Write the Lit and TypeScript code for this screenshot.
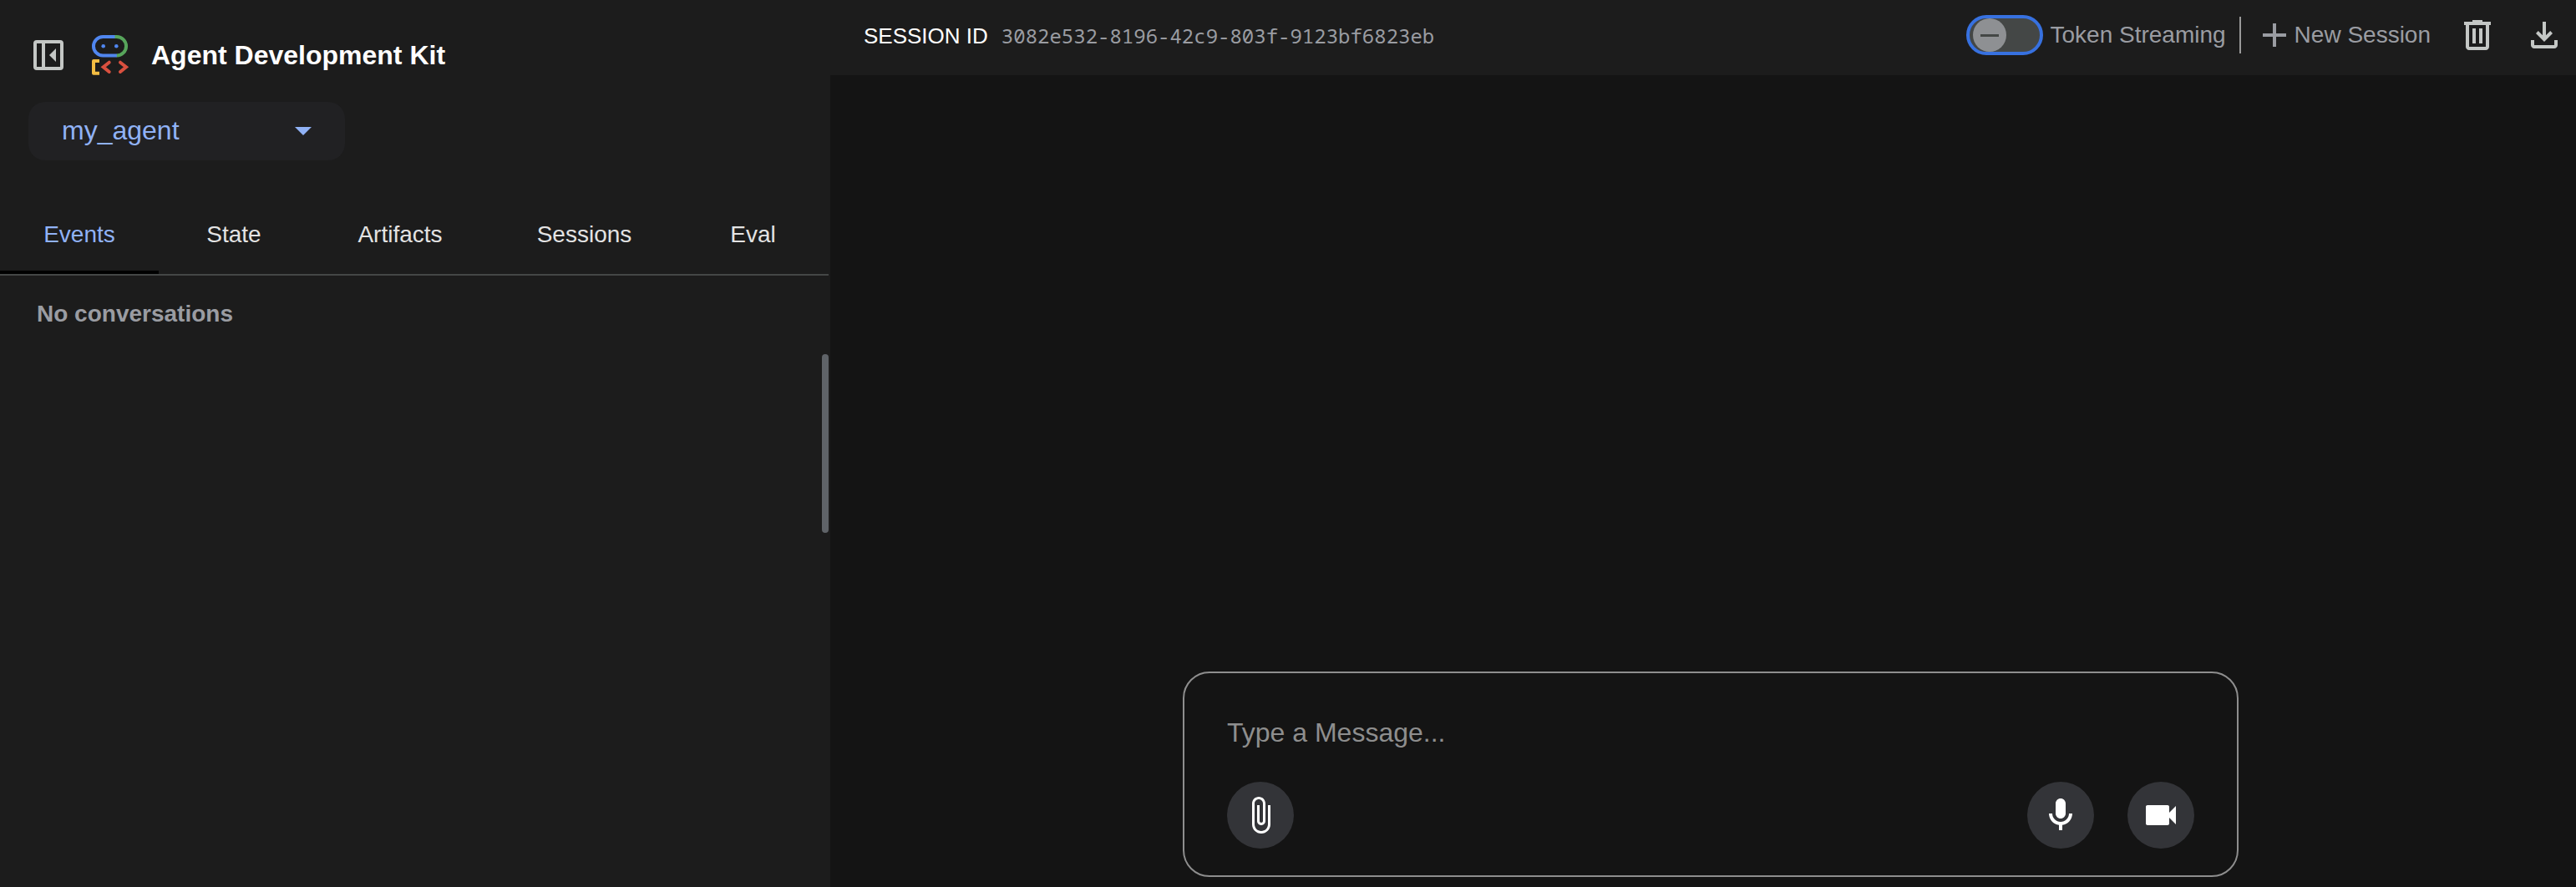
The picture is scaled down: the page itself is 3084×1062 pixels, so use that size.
import { LitElement, html, css, svg } from "lit";
import { customElement, state } from "lit/decorators.js";

const TABS = ["Events", "State", "Artifacts", "Sessions", "Eval"];

@customElement("app-root")
export class AppRoot extends LitElement {
  @state() private tab = "Events";

  static styles = css`
    :host {
      display: block;
      font-family: "Liberation Sans", Arial, sans-serif;
      color: #e3e3e3;
      color-scheme: dark;
    }
    * { box-sizing: border-box; }
    svg { display: block; flex: none; }
    button, select, textarea {
      font: inherit;
      color: inherit;
      background: none;
      border: 0;
      padding: 0;
      margin: 0;
      outline: 0;
    }
    button { cursor: pointer; }
    .app { display: flex; height: 100vh; background: #141414; }

    .side {
      position: relative;
      width: 994px;
      flex: none;
      background: #1c1c1c;
      display: flex;
      flex-direction: column;
    }
    .brand {
      display: flex;
      align-items: center;
      padding: 40px 36px 0 34px;
      height: 92px;
    }
    .collapse { color: #c4c7c5; margin-right: 27px; }
    .logo { margin-right: 24px; }
    .title { margin: 0; font-size: 32px; line-height: 52px; font-weight: 700; color: #fff; }
    .picker {
      position: relative;
      display: flex;
      align-items: center;
      width: 379px;
      height: 70px;
      margin: 30px 0 0 34px;
      border-radius: 20px;
      background: #212123;
      color: #90b2f6;
    }
    .picker select {
      appearance: none;
      width: 100%;
      height: 100%;
      padding: 0 40px 2px;
      font-size: 32px;
    }
    .caret { position: absolute; right: 40px; pointer-events: none; }
    .tabs {
      display: grid;
      grid-template-columns: 190fr 180fr 218fr 223fr 181fr;
      margin-top: 40px;
      border-bottom: 2px solid #444746;
      margin-right: 2px;
    }
    .tab {
      height: 96px;
      padding-top: 6px;
      font-size: 28px;
      border-bottom: 4px solid transparent;
    }
    .tab.on { color: #90b2f6; border-bottom-color: #000; }
    .empty { margin: 28px 44px; font-size: 28px; line-height: 36px; font-weight: 700; color: #9a9ca2; }
    .grip {
      position: absolute;
      right: 2px;
      top: 424px;
      width: 8px;
      height: 214px;
      border-radius: 4px;
      background: #5f6368;
    }

    .main { flex: 1; min-width: 0; display: flex; flex-direction: column; }
    .bar {
      display: flex;
      align-items: center;
      height: 90px;
      padding: 0 14px 6px 40px;
      background: #1c1c1c;
      color: #9a9ca2;
      font-size: 28px;
    }
    .session { display: flex; align-items: baseline; gap: 16px; }
    .sid { color: #fff; font-size: 26px; }
    .uuid { font-family: "Noto Sans Mono", "DejaVu Sans Mono", monospace; font-size: 24px; }
    .actions { display: flex; align-items: center; margin-left: auto; }
    .toggle { display: flex; align-items: center; gap: 8px; cursor: pointer; }
    .switch {
      appearance: none;
      position: relative;
      width: 92px;
      height: 48px;
      margin: 0;
      border: 4px solid #3771e0;
      border-radius: 24px;
      background: #444746;
    }
    .switch::before {
      content: "";
      position: absolute;
      left: 4px;
      top: 0;
      width: 40px;
      height: 40px;
      border-radius: 50%;
      background: linear-gradient(#444746, #444746) center / 22px 3px no-repeat #8e9093;
    }
    .rule { width: 2px; height: 44px; background: #9a9a9a; margin: 0 26px 0 16px; }
    .new { display: flex; align-items: center; gap: 10px; }
    .icon { color: #c4c7c5; }
    .trash { margin-left: 32px; }
    .down { margin-left: 32px; }

    .space { flex: 1; }
    .dock { padding: 0 20px 12px 38px; }
    .composer {
      max-width: 1264px;
      height: 246px;
      margin: 0 auto;
      padding: 51px 51px 32px;
      border: 2px solid #8e8e8e;
      border-radius: 32px;
      display: flex;
      flex-direction: column;
      justify-content: space-between;
    }
    .composer textarea { width: 100%; height: 44px; resize: none; overflow: hidden; font-size: 32px; line-height: 40px; }
    .composer textarea::placeholder { color: #8e8e8e; opacity: 1; }
    .row { display: flex; gap: 40px; }
    .round {
      width: 80px;
      height: 80px;
      border-radius: 50%;
      background: #333438;
      color: #fff;
      display: flex;
      align-items: center;
      justify-content: center;
    }
    .push { margin-left: auto; }
  `;

  private icon(size: number, path: string) {
    return html`<svg width=${size} height=${size} viewBox="0 0 24 24" fill="currentColor" aria-hidden="true">${svg`<path d=${path}></path>`}</svg>`;
  }

  private logo() {
    return html`<svg class="logo" width="48" height="50" viewBox="0 0 48 50" fill="none" stroke-width="4" aria-hidden="true">
      <path d="M29 3H14.200A11.200 11.200 0 0 0 14.200 25.500H31" stroke="#5086ef"></path>
      <path d="M28.500 3H30.800A11.200 11.200 0 0 1 30.800 25.500" stroke="#57a55b"></path>
      <circle cx="14.700" cy="14.300" r="2.300" fill="#5086ef"></circle>
      <circle cx="30.300" cy="14.300" r="2.300" fill="#5086ef"></circle>
      <path d="M10 32H3V46.700H10" stroke="#f3bd42" stroke-linejoin="round"></path>
      <path d="M21.700 33.700L14.700 39.300L21.700 45M35 33.700L42 39.300L35 45" stroke="#d9503f" stroke-linecap="round"></path>
    </svg>`;
  }

  render() {
    return html`<div class="app">
      <aside class="side">
        <header class="brand">
          <button class="collapse" aria-label="Collapse panel">
            <svg width="48" height="48" viewBox="0 0 48 48" fill="none" aria-hidden="true">
              <rect x="8" y="8" width="32" height="32" rx="2" stroke="currentColor" stroke-width="4"></rect>
              <path d="M18 8V40" stroke="currentColor" stroke-width="4"></path>
              <path d="M33 16V32L25 24Z" fill="currentColor"></path>
            </svg>
          </button>
          ${this.logo()}
          <h1 class="title">Agent Development Kit</h1>
        </header>
        <div class="picker">
          <select aria-label="Agent"><option>my_agent</option></select>
          <svg class="caret" width="20" height="10" viewBox="0 0 20 10" fill="currentColor" aria-hidden="true"><path d="M0 0H20L10 10Z"></path></svg>
        </div>
        <nav class="tabs" role="tablist">
          ${TABS.map((t) => html`<button role="tab" class="tab ${t === this.tab ? "on" : ""}" aria-selected=${t === this.tab} @click=${() => (this.tab = t)}>${t}</button>`)}
        </nav>
        <p class="empty">No conversations</p>
        <div class="grip"></div>
      </aside>
      <main class="main">
        <header class="bar">
          <div class="session">
            <span class="sid">SESSION ID</span>
            <span class="uuid">3082e532-8196-42c9-803f-9123bf6823eb</span>
          </div>
          <div class="actions">
            <label class="toggle"><input class="switch" type="checkbox" role="switch" />Token Streaming</label>
            <div class="rule"></div>
            <button class="new">
              <svg width="28" height="28" viewBox="0 0 28 28" stroke="currentColor" stroke-width="4" aria-hidden="true"><path d="M14 0V28M0 14H28"></path></svg>
              New Session
            </button>
            <button class="icon trash" aria-label="Delete session">${this.icon(48, "M7 21q-.825 0-1.412-.587T5 19V6H4V4h5V3h6v1h5v2h-1v13q0 .825-.587 1.413T17 21zM17 6H7v13h10zM9 17h2V8H9zm4 0h2V8h-2z")}</button>
            <button class="icon down" aria-label="Export session">${this.icon(48, "M12 16l-5-5 1.400-1.450 2.600 2.600V4h2v8.150l2.600-2.600L17 11zM6 20q-.825 0-1.412-.587T4 18v-3h2v3h12v-3h2v3q0 .825-.587 1.413T18 20z")}</button>
          </div>
        </header>
        <div class="space"></div>
        <div class="dock">
          <div class="composer">
            <textarea rows="1" aria-label="Message" placeholder="Type a Message..."></textarea>
            <div class="row">
              <button class="round" aria-label="Attach file">${this.icon(48, "M16.500 6v11.500c0 2.210-1.790 4-4 4s-4-1.790-4-4V5c0-1.380 1.120-2.500 2.500-2.500s2.500 1.120 2.500 2.500v10.500c0 .55-.45 1-1 1s-1-.45-1-1V6H10v9.500c0 1.380 1.120 2.500 2.500 2.500s2.500-1.120 2.500-2.500V5c0-2.210-1.790-4-4-4S7 2.790 7 5v12.500c0 3.040 2.460 5.500 5.500 5.500s5.500-2.460 5.500-5.500V6z")}</button>
              <button class="round push" aria-label="Use microphone">${this.icon(48, "M12 14c1.660 0 3-1.340 3-3V5c0-1.660-1.340-3-3-3S9 3.340 9 5v6c0 1.660 1.340 3 3 3zm5-3c0 2.760-2.240 5-5 5s-5-2.240-5-5H5c0 3.530 2.610 6.430 6 6.920V21h2v-3.080c3.390-.49 6-3.390 6-6.920z")}</button>
              <button class="round" aria-label="Use camera">${this.icon(48, "M17 10.500V7c0-.55-.45-1-1-1H4c-.55 0-1 .45-1 1v10c0 .55.45 1 1 1h12c.55 0 1-.45 1-1v-3.500l4 4v-11z")}</button>
            </div>
          </div>
        </div>
      </main>
    </div>`;
  }
}
